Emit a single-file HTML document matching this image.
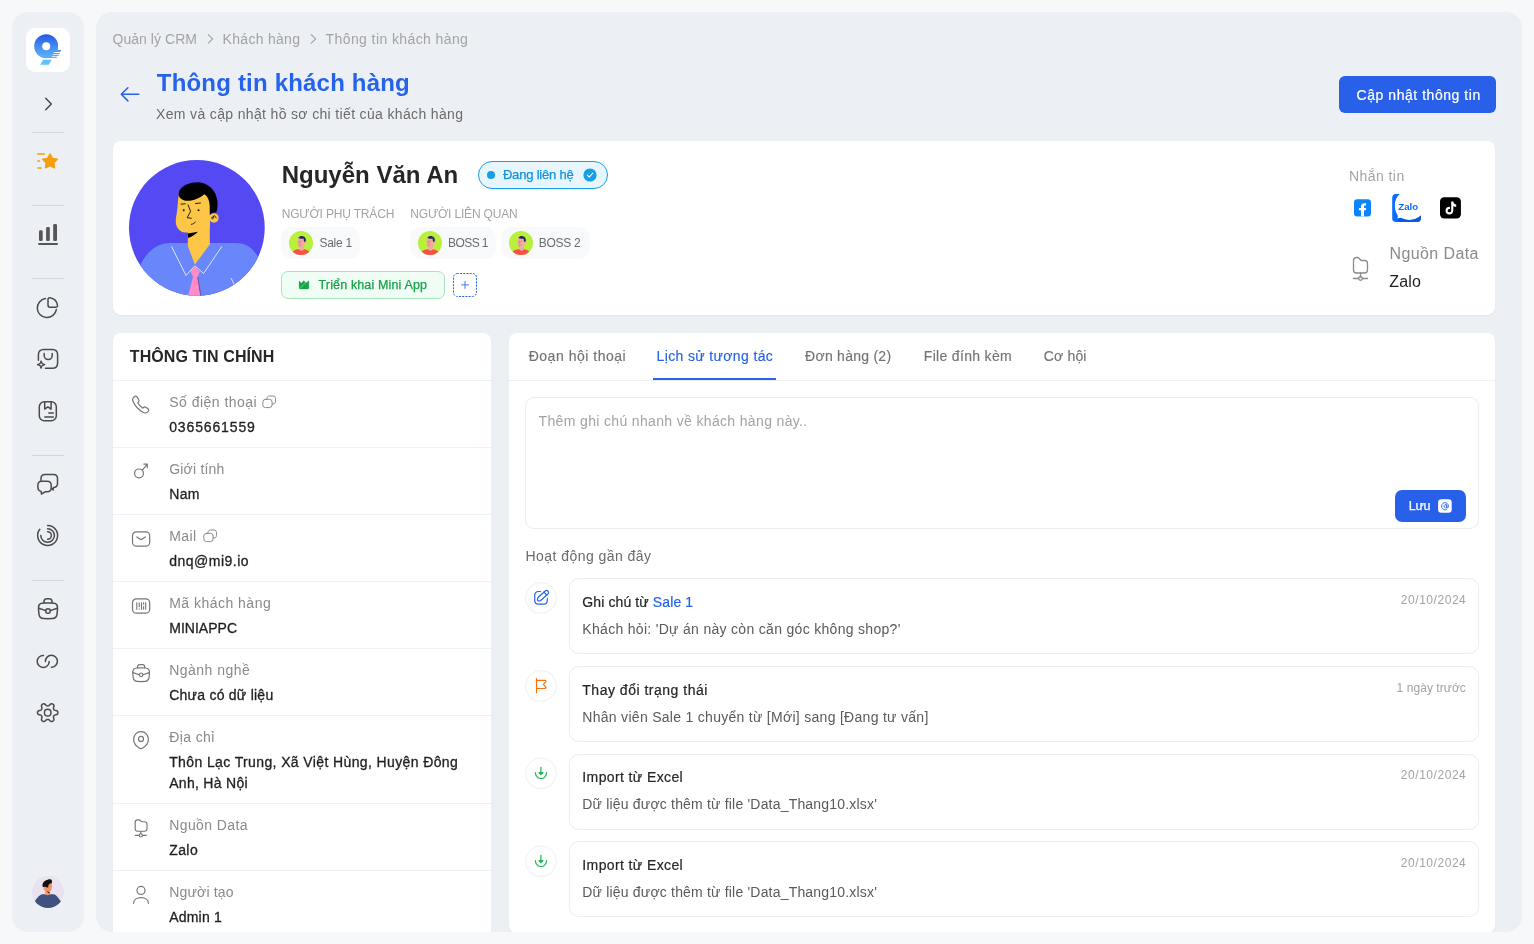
<!DOCTYPE html>
<html lang="vi">
<head>
<meta charset="utf-8">
<title>Thông tin khách hàng</title>
<style>
*{box-sizing:border-box;margin:0;padding:0}
html,body{width:1534px;height:944px;overflow:hidden}
body{background:#f7f8fa;font-family:"Liberation Sans",sans-serif;color:#262626;position:relative;font-size:14px}
.abs{position:absolute}
.t{position:absolute;white-space:nowrap;line-height:20px;height:20px}
#side{will-change:transform;position:absolute;left:12px;top:12px;width:72px;height:920px;background:#eceff4;border-radius:16px}
#main{position:absolute;left:96px;top:12px;width:1426px;height:920px;background:#eceff4;border-radius:16px;overflow:hidden}
.sep{position:absolute;left:20px;width:32px;height:1px;background:#d3d8df}
.ico{position:absolute;fill:none;stroke:#4b4b4b;stroke-width:1.5;stroke-linecap:round;stroke-linejoin:round}
.card{position:absolute;background:#fff;border-radius:8px;box-shadow:0 1px 2px rgba(0,0,0,.05)}
.g{color:#a3a3a3}
#pg{will-change:transform;position:absolute;left:-96px;top:-12px;width:1534px;height:944px}
.hr{position:absolute;height:1px;background:#eef0f3}
</style>
</head>
<body>
<div id="side">
<div class="abs" style="left:14px;top:16px;width:44px;height:44px;background:#fff;border-radius:9px"></div>
<svg class="abs" style="left:14px;top:16px" width="44" height="44" viewBox="0 0 44 44">
<defs><linearGradient id="lg" gradientUnits="userSpaceOnUse" x1="0" y1="6" x2="0" y2="34"><stop offset="0" stop-color="#2557e8"/><stop offset="0.55" stop-color="#4d96f3"/><stop offset="1" stop-color="#63c2fb"/></linearGradient></defs>
<path fill="url(#lg)" fill-rule="evenodd" d="M20.2 6.2a12 12 0 1 0 0 24a12 12 0 1 0 0-24zM20.2 14.2a4 4 0 1 1 0 8a4 4 0 0 1 0-8zM17.2 31.700h8.500l-3 5.100h-8.500z"/>
<path fill="#fff" d="M28.200 23.900h9l-0.600 1.100h-9zM27 26.200h9l-0.500 0.900h-9zM26 28.100h9l-0.400 0.700h-9zM32 21.900h6v-5h-6z"/>
<path fill="url(#lg)" d="M24 22h11.400l-1.100 1.900h-10.300zM28.200 25h5.900l-0.700 1.200h-5.200zM27 27.100h5.900l-0.600 1h-5.300zM22 28.800h9.200l-0.700 1.200h-8.500z"/>
</svg>
<svg class="ico" style="left:16px;top:72px" width="40" height="40" viewBox="0 0 40 40"><path d="M17.700 14.300l5.600 5.700l-5.600 5.700" stroke="#444" stroke-width="1.400"/></svg>
<div class="sep" style="top:120px"></div>
<svg class="abs" style="left:16px;top:128px" width="40" height="40" viewBox="0 0 40 40"><path d="M22.00 14.00L24.29 18.44L29.23 19.25L25.71 22.81L26.47 27.75L22.00 25.50L17.53 27.75L18.29 22.81L14.77 19.25L19.71 18.44Z" fill="#f59e0b" stroke="#f59e0b" stroke-width="1.6" stroke-linejoin="round"/><path d="M9.9 14h6.3M9.9 21h1.4M9.9 28h3.2" stroke="#f59e0b" stroke-width="1.7" stroke-linecap="round" fill="none"/></svg>
<div class="sep" style="top:193px"></div>
<svg class="abs" style="left:16px;top:202px" width="40" height="40" viewBox="0 0 40 40"><g fill="#555"><rect x="11" y="16.3" width="3.7" height="10.7" rx="1.3"/><rect x="18.1" y="13.1" width="3.7" height="13.9" rx="1.3"/><rect x="25.2" y="10" width="3.8" height="17" rx="1.3"/><rect x="10.1" y="29" width="19.9" height="1.9" rx="0.9"/></g></svg>
<div class="sep" style="top:266px"></div>
<svg class="ico" style="left:16px;top:275px" width="40" height="40" viewBox="0 0 40 40"><path d="M17.5 11.5a9.6 9.6 0 1 0 10.9 10.9"/><path d="M20 12.6c0-1.3 0.6-1.9 1.9-1.8a9 9 0 0 1 7.6 7.6c0.1 1.3-0.5 1.9-1.8 1.9h-5.3c-1.7 0-2.4-0.7-2.4-2.4z"/></svg>
<svg class="ico" style="left:16px;top:327px" width="40" height="40" viewBox="0 0 40 40"><path d="M10.4 21.3v-5.6c0-3.4 1.9-5.3 5.300-5.300h8.600c3.400 0 5.300 1.900 5.300 5.300v8.200c0 3.400-1.900 5.300-5.300 5.300h-6.900"/><path d="M16.200 14.600v2a4 4 0 0 0 8 0v-2"/><path d="M13.100 22l1 2.600l2.600 1l-2.600 1l-1 2.600l-1-2.600l-2.600-1l2.600-1z" stroke-width="1.3"/></svg>
<svg class="ico" style="left:16px;top:379px" width="40" height="40" viewBox="0 0 40 40"><rect x="11.300" y="10.700" width="17" height="19" rx="5"/><path d="M16.700 10.800v7.300l3.200-2.300l3.200 2.300v-7.300"/><path d="M20.800 22h4.500M16.800 25.900h8.500"/></svg>
<div class="sep" style="top:443px"></div>
<svg class="ico" style="left:16px;top:452px" width="40" height="40" viewBox="0 0 40 40"><path d="M13 17v-2.400c0-2.600 1.500-4 4-4h8.500c2.600 0 4 1.500 4 4v5c0 2.300-1.200 3.600-3.300 3.900h-0.800l-0.300 2.400l-1.800-1.600"/><path d="M13.600 17.300h5.600c2.600 0 4 1.400 4 4v2.500c0 2.600-1.400 4-4 4h-2.100l-3.600 2.200l-0.400-2.600c-2.100-0.400-3.200-1.700-3.200-3.800v-2.300c0-2.600 1.400-4 3.700-4z"/></svg>
<svg class="ico" style="left:16px;top:504px" width="40" height="40" viewBox="0 0 40 40"><path d="M19.600 9.500a10 10 0 1 1-7.800 3.800"/><path d="M19.600 12.700a6.800 6.800 0 1 1-6.800 6.800"/><path d="M19.600 15.700a3.800 3.800 0 0 1 0 7.600"/></svg>
<div class="sep" style="top:568px"></div>
<svg class="ico" style="left:16px;top:577px" width="40" height="40" viewBox="0 0 40 40"><path d="M10.500 18.500c0-3 1.600-4.200 4.600-4.400c3.200-0.200 6.600-0.200 9.800 0c3 0.200 4.600 1.400 4.600 4.400c0 2.300-0.200 4.600-0.500 6.900c-0.400 2.800-1.900 4-4.600 4.200c-3 0.200-5.800 0.200-8.800 0c-2.700-0.200-4.200-1.400-4.600-4.200c-0.300-2.300-0.500-4.600-0.500-6.900z"/><path d="M16 14v-1.400c0-1.900 1-2.800 2.800-2.800h2.400c1.800 0 2.800 0.900 2.800 2.800v1.400"/><circle cx="20" cy="22" r="2.300"/><path d="M10.800 19.200l6.900 2.400M29.200 19.200l-6.900 2.400"/></svg>
<svg class="ico" style="left:16px;top:629px" width="40" height="40" viewBox="0 0 40 40"><path d="M15.500 14.400a6 6 0 1 0 5.700 6"/><path d="M17.400 20.400a6 6 0 1 1 6 5.900"/></svg>
<svg class="ico" style="left:16px;top:681px" width="40" height="40" viewBox="0 0 40 40"><path d="M29.9 19.6L29.8 20.5L29.3 21.3L28.0 21.8L26.7 22.1L26.1 22.5L25.8 23.0L25.5 23.6L25.4 24.3L25.8 25.5L26.0 26.8L25.5 27.6L24.8 28.1L24.0 28.5L23.0 28.5L21.9 27.6L21.0 26.7L20.3 26.5L19.7 26.4L19.1 26.5L18.4 26.7L17.5 27.6L16.4 28.5L15.4 28.5L14.6 28.1L13.9 27.6L13.4 26.8L13.6 25.5L14.0 24.3L13.9 23.6L13.6 23.0L13.3 22.5L12.7 22.1L11.4 21.8L10.1 21.3L9.6 20.5L9.5 19.6L9.6 18.8L10.1 18.0L11.4 17.5L12.7 17.2L13.3 16.8L13.6 16.3L13.9 15.7L14.0 15.0L13.6 13.8L13.4 12.5L13.9 11.7L14.6 11.2L15.4 10.8L16.4 10.8L17.5 11.7L18.4 12.6L19.1 12.8L19.7 12.9L20.3 12.8L21.0 12.6L21.9 11.7L23.0 10.8L24.0 10.8L24.8 11.2L25.5 11.7L26.0 12.5L25.8 13.8L25.4 15.0L25.5 15.7L25.8 16.3L26.1 16.8L26.7 17.2L28.0 17.5L29.3 18.0L29.8 18.8Z"/><circle cx="19.700" cy="19.650" r="3.300"/></svg>
<svg class="abs" style="left:20px;top:864px" width="32" height="32" viewBox="0 0 32 32"><defs><clipPath id="cpA"><circle cx="16" cy="16" r="16"/></clipPath></defs><g clip-path="url(#cpA)"><rect width="32" height="32" fill="#e8e2f1"/><path d="M-1 32L2 27C4 23 7 19 10 18.200H22C24.500 19 27 22.500 30 27L33 32Z" fill="#41517f"/><path d="M13.200 14h4.600v4.300c-1.500 1.200-3.200 1.200-4.600 0z" fill="#f4936a"/><path d="M11.500 10c0-3 2-5 4.500-5s4 2 4 5c0 3-1.300 6-3.500 6s-5-3-5-6z" fill="#f4936a"/><path d="M10.700 11c-0.800-3 0.500-5.500 3-6.500c2-0.800 4-1.800 5.600-0.700c1 0.700 1 2.500 0.200 3.700c-1.300-0.300-2.500 0.200-3 1.500l-0.300 2.500c-1 0.300-2 0-2.500-0.700z" fill="#15110f"/><path d="M10.900 11.500c0.600 1 1.500 1.500 2.300 1.400v2c-1.200-0.400-2.200-1.700-2.300-3.400z" fill="#f0b24a"/><path d="M14.500 14.500l3.500 2.300l-1 0.800z" fill="#15110f"/></g></svg>
</div>
<div id="main"><div id="pg">
<span class="t" style="top:29.00px;font-size:14px;color:#a3a3a3;letter-spacing:0.047px;left:112.50px;">Quản lý CRM</span>
<svg class="ico" style="left:204px;top:33px;stroke:#a3a3a3;stroke-width:1.2" width="12" height="12" viewBox="0 0 12 12"><path d="M4.300 1.600l4.300 4.300l-4.300 4.300"/></svg>
<span class="t" style="top:29.00px;font-size:14px;color:#a3a3a3;letter-spacing:0.296px;left:222.60px;">Khách hàng</span>
<svg class="ico" style="left:307px;top:33px;stroke:#a3a3a3;stroke-width:1.2" width="12" height="12" viewBox="0 0 12 12"><path d="M4.300 1.600l4.300 4.300l-4.300 4.300"/></svg>
<span class="t" style="top:29.00px;font-size:14px;color:#a3a3a3;letter-spacing:0.402px;left:325.60px;">Thông tin khách hàng</span>
<svg class="ico" style="left:118px;top:84px;stroke:#2563eb;stroke-width:1.5" width="24" height="20" viewBox="0 0 24 20"><path d="M20.800 10.300h-17.300M9.900 3.700l-6.600 6.600l6.600 6.600"/></svg>
<span class="t" style="top:73.00px;font-size:24px;color:#2563eb;font-weight:700;letter-spacing:0.193px;left:156.80px;">Thông tin khách hàng</span>
<span class="t" style="top:104.00px;font-size:14px;color:#6b6b6b;letter-spacing:0.348px;left:156.00px;">Xem và cập nhật hồ sơ chi tiết của khách hàng</span>
<div class="abs" style="left:1339px;top:76px;width:157px;height:36.500px;background:#2860ea;border-radius:6px"></div>
<span class="t" style="top:85.00px;font-size:14px;color:#fff;-webkit-text-stroke:0.2px;letter-spacing:0.540px;left:1356.60px;">Cập nhật thông tin</span>
<div class="card" style="left:113px;top:141px;width:1382px;height:174.300px"></div>
<svg class="abs" style="left:125px;top:156px" width="144" height="144" viewBox="0 0 944 944"><defs><clipPath id="cpB"><circle cx="471" cy="471" r="445"/></clipPath></defs><g clip-path="url(#cpB)"><rect width="944" height="944" fill="#5549f3"/>
<path d="M60 820C110 650 190 570 300 570H730C810 570 860 620 900 720L944 944H0Z" fill="#6a86fb"/>
<path d="M412 470V590L458 712L556 580V380H412Z" fill="#fdc646"/>
<path d="M352 250C345 300 345 350 335 400C328 440 335 480 375 498C410 505 450 500 480 494L556 470V240Z" fill="#fdc646"/>
<circle cx="583" cy="406" r="31" fill="#fdc646"/>
<path d="M352 262C345 215 390 178 470 172C540 172 600 220 606 300C608 330 604 355 598 372C585 368 570 372 556 385V330C555 290 540 262 520 250C480 285 420 300 390 292C372 286 360 275 352 262Z" fill="#000"/>
<path d="M412 508L478 496C462 515 435 530 413 538Z" fill="#000"/>
<g fill="none" stroke="#111" stroke-width="6" stroke-linecap="round" stroke-linejoin="round"><path d="M368 316L395 313"/><path d="M462 312L495 308"/><path d="M413 320L430 362L408 405L435 408"/><path d="M435 448C448 446 456 440 462 432"/><path d="M566 408L586 390L598 406"/><path d="M580 398l-4 14"/></g>
<circle cx="385" cy="356" r="6.500" fill="#111"/><circle cx="482" cy="355" r="6.500" fill="#111"/>
<path d="M305 593L400 783L458 720L515 770L635 593" fill="none" stroke="#fff" stroke-width="5" stroke-linejoin="miter"/>
<path d="M458 722L428 757L446 792L412 925H498L478 792L490 757Z" fill="#ff8bcb"/>
<path d="M476 792L498 925" stroke="#3b2a55" stroke-width="4" fill="none"/>
<path d="M695 800L716 842" stroke="#fff" stroke-width="5" fill="none"/>
</g></svg>
<svg width="0" height="0" style="position:absolute"><defs><clipPath id="cpS"><circle cx="12" cy="12" r="12"/></clipPath><g id="sav" clip-path="url(#cpS)"><rect width="24" height="24" fill="#b8f03c"/><path d="M2 24c0.500-3 3-5.300 6.500-5.800h7c3.500 0.500 6 2.800 6.500 5.800z" fill="#f94e4a"/><path d="M10.200 15h4.700v3.600c-1.300 1.500-3.500 1.500-4.700 0z" fill="#f4a9a2"/><path d="M8.600 8.500c0-1.800 1.300-3 3.300-3c2.200 0 3.600 1.400 3.600 3.500v4.500c0 2.300-1.300 3.700-3 3.700c-1.800 0-2.800-1.300-3.200-3.200c-0.600-0.300-0.900-0.900-0.800-1.600z" fill="#f4a9a2"/><circle cx="16.500" cy="11.500" r="1.300" fill="#f4a9a2"/><path d="M9.500 7c0.800-1.600 2.600-2.200 4.400-1.800c2 0.500 3.100 2.100 3 4.200l-0.600 1.300l-1 0.200c-0.500-1.200-0.700-2.400-0.700-3.500c-1.800 0.700-3.700 0.500-5.100-0.400z" fill="#1d2b5a"/><path d="M9.600 14.300c0.900 0.400 1.700 0.200 2.300-0.600M10.200 9.700v0.900M12.200 9.700v0.900M11 10.500l-0.700 2.200" stroke="#8a4a5a" stroke-width="0.450" fill="none"/></g></defs></svg>
<span class="t" style="top:165.00px;font-size:24px;color:#262626;font-weight:700;letter-spacing:0.011px;left:281.70px;">Nguyễn Văn An</span>
<div class="abs" style="left:478px;top:161px;width:129.500px;height:28px;border:1px solid #159fe9;background:#e7f5fd;border-radius:14px"></div>
<div class="abs" style="left:487px;top:171px;width:8px;height:8px;border-radius:4px;background:#159fe9"></div>
<span class="t" style="top:165.00px;font-size:13px;color:#1192de;-webkit-text-stroke:0.25px;letter-spacing:-0.191px;left:502.90px;">Đang liên hệ</span>
<svg class="abs" style="left:582.800px;top:168px" width="14" height="14" viewBox="0 0 14 14"><circle cx="7" cy="7" r="6.600" fill="#159fe9"/><path d="M4.300 7.200l1.900 1.900l3.600-3.900" fill="none" stroke="#fff" stroke-width="1.200" stroke-linecap="round" stroke-linejoin="round"/></svg>
<span class="t" style="top:204.00px;font-size:12px;color:#a3a3a3;letter-spacing:-0.164px;left:281.70px;">NGƯỜI PHỤ TRÁCH</span>
<span class="t" style="top:204.00px;font-size:12px;color:#a3a3a3;letter-spacing:-0.178px;left:410.30px;">NGƯỜI LIÊN QUAN</span>
<div class="abs" style="left:281px;top:227px;width:78.5px;height:32px;background:#f8f9fb;border-radius:11px"></div>
<svg class="abs" style="left:289px;top:231px" width="24" height="24" viewBox="0 0 24 24"><use href="#sav"/></svg>
<span class="t" style="top:233.00px;font-size:12px;color:#6b6b6b;letter-spacing:-0.286px;left:319.50px;">Sale 1</span>
<div class="abs" style="left:410px;top:227px;width:86px;height:32px;background:#f8f9fb;border-radius:11px"></div>
<svg class="abs" style="left:418px;top:231px" width="24" height="24" viewBox="0 0 24 24"><use href="#sav"/></svg>
<span class="t" style="top:233.00px;font-size:12px;color:#6b6b6b;letter-spacing:-0.592px;left:448.10px;">BOSS 1</span>
<div class="abs" style="left:500.5px;top:227px;width:89px;height:32px;background:#f8f9fb;border-radius:11px"></div>
<svg class="abs" style="left:508.5px;top:231px" width="24" height="24" viewBox="0 0 24 24"><use href="#sav"/></svg>
<span class="t" style="top:233.00px;font-size:12px;color:#6b6b6b;letter-spacing:-0.272px;left:538.80px;">BOSS 2</span>
<div class="abs" style="left:281px;top:271px;width:164px;height:28px;border:1px solid #a5e5bb;background:#f0fdf4;border-radius:7px"></div>
<svg class="abs" style="left:298px;top:280px" width="12" height="10" viewBox="0 0 12 10"><path d="M1.100 0.950L3.430 3.300L5.200 1.200C5.500 0.750 6.050 0.750 6.350 1.200L8 3L10.870 0.870V7.400C10.870 8.400 10.300 8.940 9.400 8.940H2.600C1.650 8.940 1.100 8.400 1.100 7.400Z" fill="#16a34a" stroke="#16a34a" stroke-width="0.300" stroke-linejoin="round"/><path d="M2.200 8.250L7.560 2.600" stroke="#8fdcaa" stroke-width="0.700"/></svg>
<span class="t" style="top:275.00px;font-size:12.5px;color:#16a34a;-webkit-text-stroke:0.25px;letter-spacing:0.148px;left:318.50px;">Triển khai Mini App</span>
<svg class="abs" style="left:453px;top:273px" width="24" height="24" viewBox="0 0 24 24"><rect x="0.500" y="0.500" width="23" height="23" rx="4" fill="none" stroke="#2563eb" stroke-width="1" stroke-dasharray="2 1.200" stroke-dashoffset="0.600"/><path d="M12 8v7.800M8.100 11.900h7.800" stroke="#4178ec" stroke-width="1"/></svg>
<span class="t" style="top:166.00px;font-size:14px;color:#a3a3a3;letter-spacing:0.449px;left:1348.90px;">Nhắn tin</span>
<svg class="abs" style="left:1354px;top:199px" width="18" height="18" viewBox="0 0 18 18"><rect x="0" y="0.300" width="17" height="17.300" rx="3.300" fill="#0a84ff"/><path d="M10 17.600V11.300H12L12.100 9.100H10V7.900C10 7 10.400 6.600 11.300 6.600H12.100V4.300C11.600 4.200 11 4.150 10.400 4.150C8.300 4.150 7 5.400 7 7.600V9.100H4.900V11.300H7V17.600Z" fill="#fff"/></svg>
<svg class="abs" style="left:1392px;top:194px" width="30" height="29" viewBox="0 0 30 29"><defs><linearGradient id="zg" gradientUnits="userSpaceOnUse" x1="0" y1="20" x2="0" y2="28"><stop offset="0" stop-color="#0b6cff"/><stop offset="1" stop-color="#0a58d8"/></linearGradient></defs><path d="M7.800 0.100H4A3.800 3.800 0 0 0 0.200 3.900V24.200A3.800 3.800 0 0 0 4 28H25.200A3.700 3.700 0 0 0 28.900 24.300V21.600C27.500 23 25 24.500 22.400 25.300C19 26.300 15 26.200 12.500 25.300C11 24.800 9.800 24.200 8.500 23.800C7.500 24.300 6.300 24.600 5.100 24.500C5.700 23.800 6 22.800 5.800 21.800C5.500 20.800 5 20.200 4.600 19.300C4 18 3.500 17 3.300 15.800C3 14.500 2.850 13.200 2.850 11.900C2.850 10.500 2.900 9.200 3.100 7.900C3.400 6.400 3.900 5.100 4.600 3.900C5.400 2.500 6.400 1.300 7.800 0.100Z" fill="#0b6cff"/><path d="M5.100 24.500C6.300 24.600 7.500 24.300 8.500 23.800C9.800 24.200 11 24.800 12.500 25.300C15 26.200 19 26.300 22.400 25.300C25 24.500 27.500 23 28.900 21.600V24.300A3.700 3.700 0 0 1 25.200 28H8C6.500 27.500 5.500 26 5.100 24.500Z" fill="#0a5ae0"/><text x="6.300" y="15.800" font-family="Liberation Sans, sans-serif" font-weight="700" font-size="8.600" fill="#0b6cff" textLength="19.800" lengthAdjust="spacingAndGlyphs">Zalo</text></svg>
<svg class="abs" style="left:1440px;top:197px" width="21" height="22" viewBox="0 0 21 22"><rect x="0" y="0.200" width="20.900" height="21.300" rx="4.200" fill="#000"/><path d="M11.200 4.600h2.100c0.200 1.700 1.200 2.800 2.900 3v2.200c-1.100 0-2-0.300-2.900-0.900v4.600c0 2.400-1.800 4-3.900 4c-2.300 0-3.900-1.800-3.900-3.800c0-2.400 2-4.100 4.500-3.800v2.200c-1.200-0.300-2.300 0.400-2.300 1.600c0 0.900 0.700 1.600 1.700 1.600c1 0 1.800-0.700 1.800-1.900z" fill="#fff"/></svg>
<svg class="ico" style="left:1349px;top:255px;stroke:#8a8a8a;stroke-width:1.300" width="24" height="28" viewBox="0 0 24 28"><path d="M4.500 7v8c0 2 1 3 3 3h8c2 0 3-1 3-3v-6.500c0-2-1-3-3-3h-2.500c-1 0-1.500-0.300-2-1l-0.700-1c-0.500-0.700-1-1-2-1h-0.800c-2 0-3 1-3 3z"/><path d="M11.500 18v4M4.500 23.500h5M13.500 23.500h5"/><circle cx="11.500" cy="23.500" r="1.800"/></svg>
<span class="t" style="top:244.00px;font-size:16px;color:#8a8a8a;letter-spacing:0.401px;left:1389.50px;">Nguồn Data</span>
<span class="t" style="top:272.00px;font-size:16px;color:#1f1f1f;letter-spacing:0.225px;left:1389.20px;">Zalo</span>
<div class="card" style="left:113px;top:332.500px;width:378px;height:620px"></div>
<span class="t" style="top:347.00px;font-size:16px;color:#262626;font-weight:700;letter-spacing:0.099px;left:129.80px;">THÔNG TIN CHÍNH</span>
<div class="hr" style="left:113px;top:380.0px;width:378px"></div>
<div class="hr" style="left:113px;top:447.0px;width:378px"></div>
<div class="hr" style="left:113px;top:514.0px;width:378px"></div>
<div class="hr" style="left:113px;top:581.0px;width:378px"></div>
<div class="hr" style="left:113px;top:648.0px;width:378px"></div>
<div class="hr" style="left:113px;top:715.0px;width:378px"></div>
<div class="hr" style="left:113px;top:803.0px;width:378px"></div>
<div class="hr" style="left:113px;top:870.0px;width:378px"></div>
<span class="t" style="top:392.00px;font-size:14px;color:#8a8a8a;letter-spacing:0.480px;left:169.20px;">Số điện thoại</span>
<span class="t" style="top:417.00px;font-size:14px;color:#1f1f1f;-webkit-text-stroke:0.3px;letter-spacing:0.869px;left:169.20px;">0365661559</span>
<span class="t" style="top:459.00px;font-size:14px;color:#8a8a8a;letter-spacing:0.207px;left:169.20px;">Giới tính</span>
<span class="t" style="top:484.00px;font-size:14px;color:#1f1f1f;-webkit-text-stroke:0.3px;letter-spacing:0.369px;left:169.20px;">Nam</span>
<span class="t" style="top:526.00px;font-size:14px;color:#8a8a8a;letter-spacing:0.443px;left:169.20px;">Mail</span>
<span class="t" style="top:551.00px;font-size:14px;color:#1f1f1f;-webkit-text-stroke:0.3px;letter-spacing:0.498px;left:169.20px;">dnq@mi9.io</span>
<span class="t" style="top:593.00px;font-size:14px;color:#8a8a8a;letter-spacing:0.480px;left:169.20px;">Mã khách hàng</span>
<span class="t" style="top:618.00px;font-size:14px;color:#1f1f1f;-webkit-text-stroke:0.3px;letter-spacing:0.030px;left:169.20px;">MINIAPPC</span>
<span class="t" style="top:660.00px;font-size:14px;color:#8a8a8a;letter-spacing:0.478px;left:169.20px;">Ngành nghề</span>
<span class="t" style="top:685.00px;font-size:14px;color:#1f1f1f;-webkit-text-stroke:0.3px;letter-spacing:0.252px;left:169.20px;">Chưa có dữ liệu</span>
<span class="t" style="top:815.00px;font-size:14px;color:#8a8a8a;letter-spacing:0.409px;left:169.20px;">Nguồn Data</span>
<span class="t" style="top:840.00px;font-size:14px;color:#1f1f1f;-webkit-text-stroke:0.3px;letter-spacing:0.422px;left:169.20px;">Zalo</span>
<span class="t" style="top:882.00px;font-size:14px;color:#8a8a8a;letter-spacing:0.185px;left:169.20px;">Người tạo</span>
<span class="t" style="top:907.00px;font-size:14px;color:#1f1f1f;-webkit-text-stroke:0.3px;letter-spacing:0.207px;left:169.20px;">Admin 1</span>
<span class="t" style="top:727.00px;font-size:14px;color:#8a8a8a;letter-spacing:0.401px;left:169.20px;">Địa chỉ</span>
<span class="t" style="top:752.00px;font-size:14px;color:#1f1f1f;-webkit-text-stroke:0.3px;letter-spacing:0.382px;left:169.20px;">Thôn Lạc Trung, Xã Việt Hùng, Huyện Đông</span>
<span class="t" style="top:773.00px;font-size:14px;color:#1f1f1f;-webkit-text-stroke:0.3px;letter-spacing:0.292px;left:169.20px;">Anh, Hà Nội</span>
<svg class="ico" style="left:129px;top:393px;stroke:#757575;stroke-width:1.2" width="24" height="24" viewBox="0 0 24 24"><path d="M8.200 4.200c-0.800-1.200-1.900-1.400-2.900-0.600c-1.700 1.300-2.100 2.900-1.200 5c2 4.600 5.300 8.200 9.800 10.700c2 1.100 3.700 0.900 5.200-0.600c1-1 0.900-2.100-0.200-3l-1.700-1.300c-1-0.700-1.900-0.700-2.700 0.100l-0.700 0.700c-2.200-1.400-3.900-3.200-5.100-5.400l0.700-0.700c0.800-0.800 0.900-1.700 0.200-2.700z"/></svg>
<svg class="ico" style="left:261.500px;top:395px;stroke:#8a8a8a;stroke-width:1" width="15" height="14" viewBox="0 0 15 14"><path d="M5 4.300v-0.600c0-1.800 0.900-2.700 2.700-2.700h3.100c1.800 0 2.700 0.900 2.700 2.700v2.600c0 1.800-0.900 2.700-2.700 2.700h-0.600"/><rect x="0.800" y="4.300" width="9.300" height="8.300" rx="2.700"/></svg>
<svg class="ico" style="left:129px;top:459px;stroke:#757575;stroke-width:1.2" width="24" height="24" viewBox="0 0 24 24"><circle cx="10" cy="14.400" r="4.400"/><path d="M13.300 11.100L18.200 5.300M14.800 5.100h3.500v3.500"/></svg>
<svg class="ico" style="left:129px;top:527px;stroke:#757575;stroke-width:1.2" width="24" height="24" viewBox="0 0 24 24"><rect x="3.500" y="4.800" width="17.200" height="14.400" rx="4"/><path d="M7.900 9.900l3 2.100c0.800 0.600 1.600 0.600 2.400 0l3-2.100"/></svg>
<svg class="ico" style="left:202.500px;top:529px;stroke:#8a8a8a;stroke-width:1" width="15" height="14" viewBox="0 0 15 14"><path d="M5 4.300v-0.600c0-1.800 0.900-2.700 2.700-2.700h3.100c1.800 0 2.700 0.900 2.700 2.700v2.600c0 1.800-0.900 2.700-2.700 2.700h-0.600"/><rect x="0.800" y="4.300" width="9.300" height="8.300" rx="2.700"/></svg>
<svg class="ico" style="left:129px;top:594px;stroke:#757575;stroke-width:1.2" width="24" height="24" viewBox="0 0 24 24"><rect x="3.500" y="4.800" width="17.200" height="14.400" rx="4"/><path d="M7.800 8.800v6.400M10.200 8.800v4M10.200 15v0.200M12.500 8.800v6.400M14.600 8.800v1.500M14.600 12.500v2.700M16.700 8.800v6.400" stroke-width="1.100"/></svg>
<svg class="ico" style="left:129px;top:661px;stroke:#757575;stroke-width:1.2" width="24" height="24" viewBox="0 0 24 24"><path d="M3.800 11c0-2.700 1.400-3.800 4-4c2.900-0.200 5.700-0.200 8.600 0c2.600 0.200 4 1.300 4 4c0 2-0.100 3.800-0.400 5.600c-0.400 2.500-1.700 3.600-4 3.800c-2.600 0.200-5.200 0.200-7.800 0c-2.300-0.200-3.600-1.300-4-3.800c-0.300-1.800-0.400-3.600-0.400-5.600z"/><path d="M8.500 7v-1c0-1.500 0.800-2.300 2.300-2.300h2.600c1.500 0 2.300 0.800 2.300 2.300v1"/><circle cx="12.100" cy="13.800" r="1.800"/><path d="M4 11.600l6.300 2.100M20.200 11.600l-6.300 2.100"/></svg>
<svg class="ico" style="left:129px;top:728px;stroke:#757575;stroke-width:1.2" width="24" height="24" viewBox="0 0 24 24"><path d="M4.600 11.100c0-4.200 3.200-7.400 7.400-7.400s7.400 3.200 7.400 7.400c0 4.300-3.400 7.700-6 9.100c-0.900 0.500-1.900 0.500-2.800 0c-2.600-1.400-6-4.800-6-9.100z"/><circle cx="12" cy="10.900" r="2.500"/></svg>
<svg class="ico" style="left:129px;top:816px;stroke:#757575;stroke-width:1.1" width="24" height="24" viewBox="0 0 24 24"><path d="M6.200 6.400v6.300c0 1.700 0.800 2.500 2.500 2.500h6.800c1.700 0 2.500-0.800 2.500-2.500v-4.400c0-1.700-0.800-2.500-2.500-2.500h-2c-0.800 0-1.300-0.200-1.700-0.800l-0.300-0.400c-0.400-0.500-0.900-0.700-1.700-0.700h-1.100c-1.700 0-2.500 0.800-2.500 2.500z"/><path d="M11.800 15.600v2.200M6.300 19.400h3.900M13.400 19.400h3.900"/><circle cx="11.800" cy="19.400" r="1.600"/></svg>
<svg class="ico" style="left:129px;top:883px;stroke:#757575;stroke-width:1.2" width="24" height="24" viewBox="0 0 24 24"><circle cx="12" cy="7.400" r="4"/><path d="M4.600 20.300c0-3.300 3-5.600 7.400-5.600s7.400 2.300 7.400 5.600"/></svg>
<div class="card" style="left:509px;top:332.500px;width:986px;height:600px"></div>
<span class="t" style="top:346.00px;font-size:14px;color:#737373;-webkit-text-stroke:0.15px;letter-spacing:0.516px;left:528.70px;">Đoạn hội thoại</span>
<span class="t" style="top:346.00px;font-size:14px;color:#2563eb;-webkit-text-stroke:0.15px;letter-spacing:0.367px;left:656.50px;">Lịch sử tương tác</span>
<span class="t" style="top:346.00px;font-size:14px;color:#737373;-webkit-text-stroke:0.15px;letter-spacing:0.261px;left:805.10px;">Đơn hàng (2)</span>
<span class="t" style="top:346.00px;font-size:14px;color:#737373;-webkit-text-stroke:0.15px;letter-spacing:0.321px;left:923.80px;">File đính kèm</span>
<span class="t" style="top:346.00px;font-size:14px;color:#737373;-webkit-text-stroke:0.15px;letter-spacing:0.165px;left:1043.80px;">Cơ hội</span>
<div class="hr" style="left:509px;top:380px;width:986px"></div>
<div class="abs" style="left:653px;top:378px;width:123px;height:2px;background:#2563eb"></div>
<div class="abs" style="left:525px;top:397px;width:954px;height:132px;border:1px solid #ecedf1;border-radius:9px"></div>
<span class="t" style="top:411.00px;font-size:14px;color:#a3a3a3;letter-spacing:0.346px;left:538.60px;">Thêm ghi chú nhanh về khách hàng này..</span>
<div class="abs" style="left:1395px;top:490px;width:71px;height:32px;background:#2860ea;border-radius:7px"></div>
<span class="t" style="top:496.00px;font-size:12.5px;color:#fff;-webkit-text-stroke:0.25px;letter-spacing:-0.241px;left:1408.70px;">Lưu</span>
<svg class="abs" style="left:1438px;top:499px" width="14" height="14" viewBox="0 0 14 14"><rect x="0.100" y="0.200" width="13.600" height="13.500" rx="3.200" fill="#fff"/><path d="M8.700 5.600v3.200a1.700 1.700 0 1 1-1.700-3.200a1.700 2 0 0 1 1.700 1.800c0 1.200 0.200 1.700 1 1.500c0.500-0.300 0.700-1 0.700-1.900a3.400 3.700 0 1 0-2 3.700" fill="none" stroke="#2860ea" stroke-width="0.900" stroke-linecap="round"/></svg>
<span class="t" style="top:546.00px;font-size:14px;color:#6b6b6b;letter-spacing:0.461px;left:525.40px;">Hoạt động gần đây</span>
<div class="abs" style="left:569px;top:578px;width:910px;height:75.5px;border:1px solid #ecedf1;border-radius:10px"></div>
<svg class="abs" style="left:525px;top:582px" width="32" height="33" viewBox="0 0 32 33"><g transform="translate(0 0)"><circle cx="16" cy="15.900" r="15.400" fill="#fff" stroke="#eeeff2"/><g fill="none" stroke="#2563eb" stroke-width="1.200" stroke-linecap="round" stroke-linejoin="round"><path d="M15.500 9.500h-1.800c-2.700 0-4 1.300-4 4v4.700c0 2.700 1.300 4 4 4h4.600c2.700 0 4-1.300 4-4v-1.900"/><g transform="translate(17.900 13.800) rotate(-42.300)"><path d="M-4.400 -2H4.950a2 2 0 0 1 0 4H-4.400C-5.600 2 -6.950 0.800 -6.950 0C-6.950 -0.800 -5.600 -2 -4.400 -2Z"/><path d="M3.300 -2V2"/></g></g></g></svg>
<span class="t" style="top:592.00px;font-size:14px;color:#262626;-webkit-text-stroke:0.2px;letter-spacing:0.112px;left:582.30px;">Ghi chú từ <span style="color:#2563eb">Sale 1</span></span>
<span class="t" style="top:619.00px;font-size:14px;color:#5a5a5a;letter-spacing:0.307px;left:582.30px;">Khách hỏi: &#x27;Dự án này còn căn góc không shop?&#x27;</span>
<span class="t" style="top:590.00px;font-size:12px;color:#a3a3a3;letter-spacing:0.549px;right:67.65px;">20/10/2024</span>
<div class="abs" style="left:569px;top:666px;width:910px;height:75.5px;border:1px solid #ecedf1;border-radius:10px"></div>
<svg class="abs" style="left:525px;top:670px" width="32" height="33" viewBox="0 0 32 33"><g transform="translate(0 0)"><circle cx="16" cy="15.900" r="15.400" fill="#fff" stroke="#eeeff2"/><g fill="none" stroke="#f97316" stroke-width="1.200" stroke-linecap="round" stroke-linejoin="round"><path d="M11.500 8.600V22.700"/><path d="M11.500 10.300h8.400c1 0 1.400 0.800 0.800 1.500l-2.300 2.600l2.300 2.600c0.600 0.700 0.200 1.500-0.800 1.500h-8.400"/></g></g></svg>
<span class="t" style="top:680.00px;font-size:14px;color:#262626;-webkit-text-stroke:0.2px;letter-spacing:0.507px;left:582.30px;">Thay đổi trạng thái</span>
<span class="t" style="top:707.00px;font-size:14px;color:#5a5a5a;letter-spacing:0.291px;left:582.30px;">Nhân viên Sale 1 chuyển từ [Mới] sang [Đang tư vấn]</span>
<span class="t" style="top:678.00px;font-size:12px;color:#a3a3a3;letter-spacing:0.054px;right:68.15px;">1 ngày trước</span>
<div class="abs" style="left:569px;top:754px;width:910px;height:76px;border:1px solid #ecedf1;border-radius:10px"></div>
<svg class="abs" style="left:525px;top:757px" width="32" height="33" viewBox="0 0 32 33"><g transform="translate(0 0.4)"><circle cx="16" cy="15.900" r="15.400" fill="#fff" stroke="#eeeff2"/><g fill="none" stroke="#1fb356" stroke-width="1.200" stroke-linecap="round" stroke-linejoin="round"><path d="M15.900 10v6"/><path d="M13.900 15.300h4l-2 2z" fill="#1fb356"/><path d="M10.400 15.300a5.600 5.800 0 0 0 11.200 0"/></g></g></svg>
<span class="t" style="top:767.00px;font-size:14px;color:#262626;-webkit-text-stroke:0.2px;letter-spacing:0.389px;left:582.30px;">Import từ Excel</span>
<span class="t" style="top:794.00px;font-size:14px;color:#5a5a5a;letter-spacing:0.190px;left:582.30px;">Dữ liệu được thêm từ file &#x27;Data_Thang10.xlsx&#x27;</span>
<span class="t" style="top:765.00px;font-size:12px;color:#a3a3a3;letter-spacing:0.549px;right:67.65px;">20/10/2024</span>
<div class="abs" style="left:569px;top:841px;width:910px;height:76px;border:1px solid #ecedf1;border-radius:10px"></div>
<svg class="abs" style="left:525px;top:845px" width="32" height="33" viewBox="0 0 32 33"><g transform="translate(0 0.4)"><circle cx="16" cy="15.900" r="15.400" fill="#fff" stroke="#eeeff2"/><g fill="none" stroke="#1fb356" stroke-width="1.200" stroke-linecap="round" stroke-linejoin="round"><path d="M15.900 10v6"/><path d="M13.900 15.300h4l-2 2z" fill="#1fb356"/><path d="M10.400 15.300a5.600 5.800 0 0 0 11.200 0"/></g></g></svg>
<span class="t" style="top:855.00px;font-size:14px;color:#262626;-webkit-text-stroke:0.2px;letter-spacing:0.389px;left:582.30px;">Import từ Excel</span>
<span class="t" style="top:882.00px;font-size:14px;color:#5a5a5a;letter-spacing:0.190px;left:582.30px;">Dữ liệu được thêm từ file &#x27;Data_Thang10.xlsx&#x27;</span>
<span class="t" style="top:853.00px;font-size:12px;color:#a3a3a3;letter-spacing:0.549px;right:67.65px;">20/10/2024</span>
</div></div>
</body>
</html>
